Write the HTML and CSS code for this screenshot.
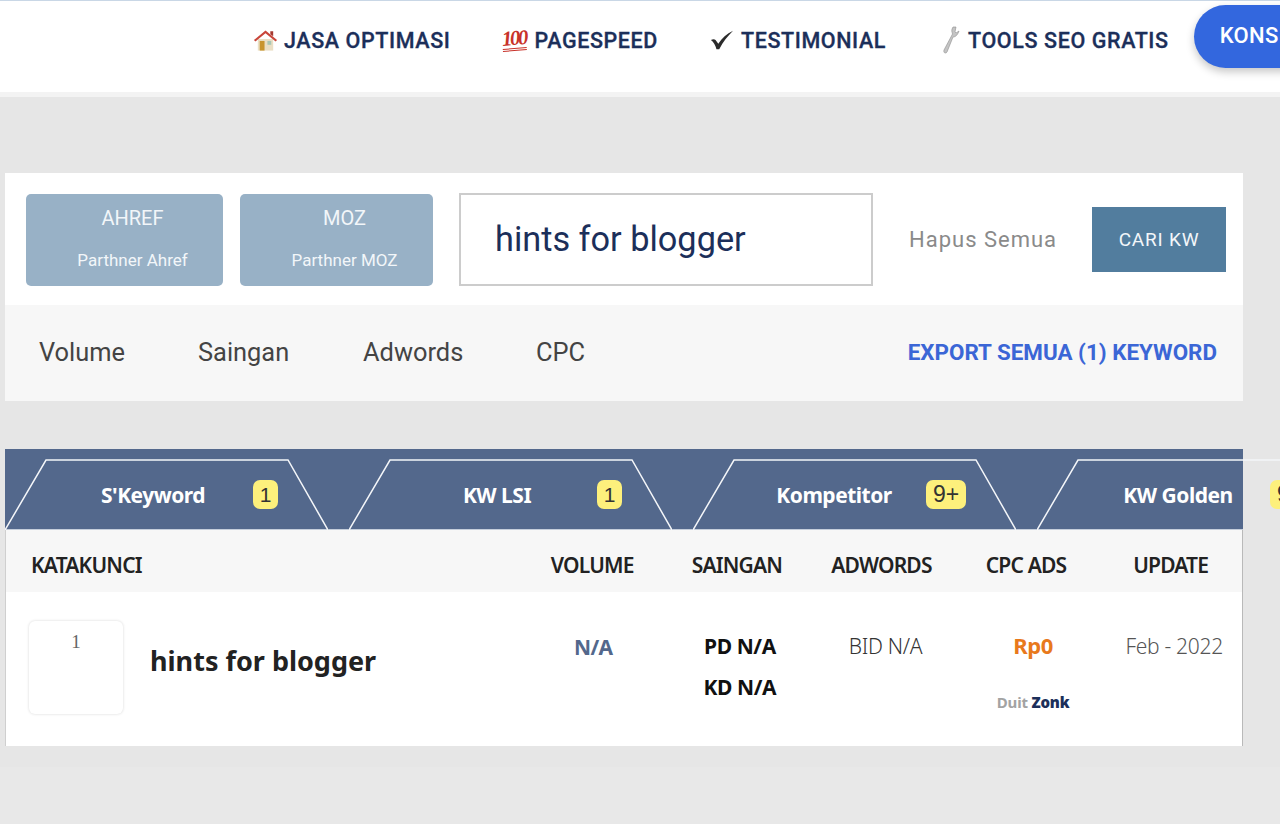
FILE: index.html
```html
<!DOCTYPE html>
<html lang="en">
<head>
  <meta charset="UTF-8" />
  <meta name="viewport" content="width=device-width, initial-scale=1.0"/>
  <title>Cari Keyword</title>
  <link rel="stylesheet" href="styles.css">
</head>
<body>
  <header class="topbar">
    <nav class="nav">
      <a class="nav-item nav-home">
        <svg class="icon" width="25" height="24" viewBox="0 0 26 24">
          <path d="M5 11h16v12H5z" fill="#eadfc4"/>
          <path d="M7 13h5v10H7z" fill="#c8952e"/>
          <path d="M15 13h4v4h-4z" fill="#a9c7b4"/>
          <path d="M1 12 13 2l12 10-1.500 1.500L13 5 2.500 13.500z" fill="#c9453a"/>
          <path d="M18 3h3v5l-3-2z" fill="#a5382f"/>
        </svg>
        JASA OPTIMASI
      </a>
      <a class="nav-item nav-speed">
        <span class="hundred">100</span>
        PAGESPEED
      </a>
      <a class="nav-item nav-testi">
        <svg class="icon" width="24" height="22" viewBox="0 0 26 22">
          <path d="M1 11c2-1 4-1 5 0l3 4C13 9 18 4 25 1 19 7 14 13 10 21H7C6 17 4 13 1 11z" fill="#2b2b2b"/>
        </svg>
        TESTIMONIAL
      </a>
      <a class="nav-item nav-tools">
        <svg class="icon" width="18" height="28" viewBox="0 0 18 28">
          <path d="M11 1c-2 3-1 5-.500 7L2 24c-1 3 2 4 3 2l6-15c3 0 5-3 6-6l-3 2-1-1 1-5z" fill="#c4c4c4" stroke="#8f8f8f" stroke-width=".6"/>
        </svg>
        TOOLS SEO GRATIS
      </a>
      <a class="nav-cta">KONS</a>
    </nav>
  </header>

  <main class="page">
    <section class="search-panel">
      <div class="search-row">
        <div class="partner partner-ahref">
          <span class="partner-name">AHREF</span>
          <span class="partner-sub">Parthner Ahref</span>
        </div>
        <div class="partner partner-moz">
          <span class="partner-name">MOZ</span>
          <span class="partner-sub">Parthner MOZ</span>
        </div>
        <input class="search-input" type="text" value="hints for blogger" />
        <a class="clear-link">Hapus Semua</a>
        <button class="search-btn">CARI KW</button>
      </div>
      <div class="filter-row">
        <span class="filter filter-volume">Volume</span>
        <span class="filter filter-saingan">Saingan</span>
        <span class="filter filter-adwords">Adwords</span>
        <span class="filter">CPC</span>
        <a class="export-link">EXPORT SEMUA (1) KEYWORD</a>
      </div>
    </section>

    <section class="result-panel">
      <div class="tabs">
        <div class="tab">
          <svg class="tab-shape" viewBox="0 0 323 71" preserveAspectRatio="none"><path d="M0 71 41 1H283L323 71"/></svg>
          <span class="tab-label">S'Keyword</span><span class="badge">1</span>
        </div>
        <div class="tab">
          <svg class="tab-shape" viewBox="0 0 323 71" preserveAspectRatio="none"><path d="M0 71 41 1H283L323 71"/></svg>
          <span class="tab-label">KW LSI</span><span class="badge">1</span>
        </div>
        <div class="tab tab-wide">
          <svg class="tab-shape" viewBox="0 0 323 71" preserveAspectRatio="none"><path d="M0 71 41 1H283L323 71"/></svg>
          <span class="tab-label">Kompetitor</span><span class="badge">9+</span>
        </div>
        <div class="tab tab-wide">
          <svg class="tab-shape" viewBox="0 0 323 71" preserveAspectRatio="none"><path d="M0 71 41 1H283L323 71"/></svg>
          <span class="tab-label">KW Golden</span><span class="badge">9+</span>
        </div>
      </div>

      <div class="table-head">
        <div class="th th-key">KATAKUNCI</div>
        <div class="th">VOLUME</div>
        <div class="th">SAINGAN</div>
        <div class="th">ADWORDS</div>
        <div class="th">CPC ADS</div>
        <div class="th">UPDATE</div>
      </div>

      <div class="table-row">
        <div class="td-key">
          <div class="rank">1</div>
          <div class="kw-name">hints for blogger</div>
        </div>
        <div class="td td-volume">N/A</div>
        <div class="td td-saingan">
          <div>PD N/A</div>
          <div>KD N/A</div>
        </div>
        <div class="td td-adwords">BID N/A</div>
        <div class="td td-cpc">
          <div class="cpc-price">Rp0</div>
          <div class="cpc-note">Duit <b>Zonk</b></div>
        </div>
        <div class="td td-update">Feb - 2022</div>
      </div>
    </section>
  </main>
  <div class="bottom-strip"></div>
</body>
</html>
```

FILE: styles.css
```css
* {
  margin: 0;
  padding: 0;
  box-sizing: border-box;
}

html, body {
  height: 824px;
  overflow: hidden;
}

body {
  background: #e6e6e6;
  font-family: Roboto, sans-serif;
}

/* Top nav */
.topbar {
  height: 97px;
  background: #fff;
  border-top: 1px solid #c9d7e6;
  border-bottom: 5px solid #f3f3f3;
}

.nav {
  display: flex;
  align-items: center;
  height: 78px;
  padding-left: 253px;
  white-space: nowrap;
}

.nav-item {
  display: flex;
  align-items: center;
  gap: 6px;
  color: #1c2f5a;
  font-size: 21.5px;
  font-weight: 500;
  letter-spacing: 0.6px;
  -webkit-text-stroke: 0.3px #1c2f5a;
}

.nav-speed { margin-left: 52px; gap: 8px; }
.nav-testi { margin-left: 52px; gap: 7px; }
.nav-tools { margin-left: 56px; gap: 8px; }

.hundred {
  display: block;
  width: 24px;
  color: #c8322a;
  font-family: "Liberation Serif", serif;
  font-style: italic;
  font-weight: 700;
  font-size: 21px;
  letter-spacing: -2.5px;
  line-height: 19px;
  border-bottom: 3px double #c8322a;
  transform: rotate(-5deg);
  -webkit-text-stroke: 0;
}

.nav-cta {
  flex: none;
  margin-left: 25px;
  margin-top: -8px;
  padding: 0 60px 0 26px;
  height: 63px;
  line-height: 62px;
  background: #3367de;
  color: #fff;
  font-size: 22px;
  font-weight: 500;
  letter-spacing: 0.3px;
  border-radius: 32px;
  box-shadow: 0 4px 8px rgba(0, 0, 0, 0.22);
}

/* Page */
.page {
  padding: 76px 37px 0 5px;
}

.search-row {
  display: flex;
  align-items: center;
  height: 132px;
  padding-left: 21px;
  background: #fff;
}

.partner {
  display: flex;
  flex-direction: column;
  align-items: center;
  height: 92px;
  margin-top: 1px;
  padding: 13px 0 0 16px;
  background: #98b1c6;
  border-radius: 5px;
  color: #f2f6f9;
}

.partner-ahref { width: 197px; }
.partner-moz { width: 193px; margin-left: 17px; }

.partner-name { font-size: 20px; line-height: 23px; }
.partner-sub { font-size: 17px; line-height: 20px; margin-top: 20px; }

.search-input {
  width: 414px;
  height: 93px;
  margin-left: 26px;
  padding-left: 34px;
  border: 2px solid #cccccc;
  background: #fff;
  color: #1c2f5a;
  font-family: Roboto, sans-serif;
  font-size: 34.3px;
  outline: none;
}

.clear-link {
  margin-left: 36px;
  color: #8a8a8a;
  font-size: 22px;
  letter-spacing: 1px;
  white-space: nowrap;
}

.search-btn {
  width: 134px;
  height: 65px;
  margin-left: 35px;
  border: none;
  background: #527d9e;
  color: #f2f6f9;
  font-family: Roboto, sans-serif;
  font-size: 19px;
  letter-spacing: 0.8px;
}

.filter-row {
  display: flex;
  align-items: center;
  height: 96px;
  padding: 0 26px 2px 34px;
  background: #f7f7f7;
  color: #444;
  white-space: nowrap;
}

.filter { font-size: 25.4px; }
.filter-volume { width: 159px; }
.filter-saingan { width: 165px; }
.filter-adwords { width: 173px; }

.export-link {
  margin-left: auto;
  color: #3b66d6;
  font-size: 22.4px;
  font-weight: 700;
}

/* Results */
.result-panel {
  margin-top: 48px;
  background: #fff;
  border-left: 1px solid #cfcfcf;
  border-right: 1px solid #b9b9b9;
  font-family: "Noto Sans", sans-serif;
}

.tabs {
  display: flex;
  gap: 21px;
  height: 81px;
  margin: 0 -1px;
  padding-top: 10px;
  background: #53688c;
  border-bottom: 1px solid #c5cedb;
  white-space: nowrap;
}

.tab {
  position: relative;
  flex: none;
  display: flex;
  align-items: center;
  width: 323px;
  height: 71px;
  color: #fff;
}

.tab-shape {
  position: absolute;
  left: 0;
  top: 0;
  width: 100%;
  height: 100%;
  fill: none;
  stroke: #f4f6f9;
  stroke-width: 1.500;
}

.tab-label {
  position: relative;
  width: 248px;
  text-align: center;
  font-size: 21px;
  font-weight: 700;
  letter-spacing: -0.5px;
  padding-left: 48px;
}

.badge {
  position: relative;
  min-width: 25px;
  height: 29px;
  padding: 0 3px;
  background: #fdf07c;
  border-radius: 7px;
  color: #333;
  font-family: "Liberation Sans", sans-serif;
  font-size: 21px;
  line-height: 29px;
  text-align: center;
}

.tab-wide .tab-label {
  width: 233px;
  padding-left: 49px;
}

.tab-wide .badge {
  min-width: 40px;
  font-size: 23px;
}

.table-head,
.table-row {
  display: grid;
  grid-template-columns: 514px repeat(5, 144.6px);
}

.table-head {
  height: 62px;
  padding-top: 7px;
  align-items: center;
  background: #f7f7f7;
}

.th {
  text-align: center;
  color: #222;
  font-size: 21px;
  font-weight: 600;
  letter-spacing: -0.8px;
}

.th-key {
  text-align: left;
  padding-left: 25px;
}

.table-row {
  height: 154px;
  background: #fff;
}

.td-key {
  display: flex;
  align-items: flex-start;
  padding: 29px 0 0 23px;
}

.rank {
  width: 94px;
  height: 93px;
  padding-top: 10px;
  background: #fff;
  border-radius: 6px;
  box-shadow: 0 0 3px rgba(0, 0, 0, 0.16);
  color: #666;
  font-family: "Liberation Serif", serif;
  font-size: 19px;
  text-align: center;
}

.kw-name {
  margin: 21px 0 0 27px;
  color: #222;
  font-size: 27px;
  font-weight: 700;
  white-space: nowrap;
}

.td {
  padding-top: 40px;
  text-align: center;
  font-size: 21px;
  letter-spacing: -0.4px;
}

.td-volume {
  padding-top: 41px;
  padding-left: 2px;
  color: #53688c;
  font-weight: 700;
  letter-spacing: -0.6px;
}

.td-saingan {
  padding-left: 6px;
  color: #111;
  font-weight: 700;
  line-height: 41px;
  padding-top: 34px;
}

.td-adwords {
  padding-left: 8px;
  color: #333;
  font-weight: 300;
  letter-spacing: -0.3px;
}

.td-cpc {
  padding-top: 38px;
  padding-left: 14px;
}

.cpc-price {
  color: #e8791c;
  font-size: 22px;
  font-weight: 700;
}

.cpc-note {
  margin-top: 32px;
  color: #a3a3a3;
  font-size: 15px;
  font-weight: 700;
  letter-spacing: -0.2px;
}

.cpc-note b { color: #1c2f5a; }

.td-update {
  padding-left: 7px;
  color: #555;
  font-weight: 300;
  letter-spacing: -0.3px;
  white-space: nowrap;
}

.bottom-strip {
  height: 60px;
  margin-top: 21px;
  background: #e8e8e8;
}
```
